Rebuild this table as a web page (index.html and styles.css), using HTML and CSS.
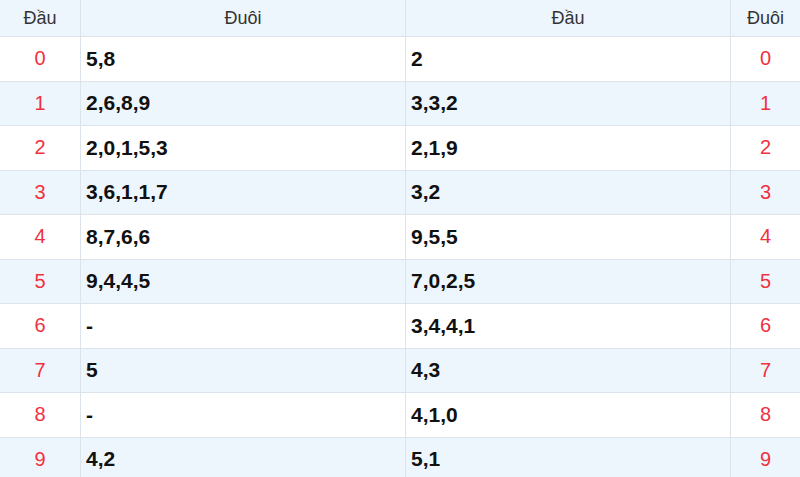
FILE: index.html
```html
<!DOCTYPE html>
<html>
<head>
<meta charset="utf-8">
<link rel="stylesheet" href="styles.css">
</head>
<body>
<table class="lt">
  <colgroup>
    <col class="c1"><col class="c2"><col class="c3"><col class="c4">
  </colgroup>
  <thead>
    <tr><th>Đầu</th><th>Đuôi</th><th>Đầu</th><th>Đuôi</th></tr>
  </thead>
  <tbody>
    <tr><td class="n">0</td><td class="v">5,8</td><td class="v">2</td><td class="n">0</td></tr>
    <tr><td class="n">1</td><td class="v">2,6,8,9</td><td class="v">3,3,2</td><td class="n">1</td></tr>
    <tr><td class="n">2</td><td class="v">2,0,1,5,3</td><td class="v">2,1,9</td><td class="n">2</td></tr>
    <tr><td class="n">3</td><td class="v">3,6,1,1,7</td><td class="v">3,2</td><td class="n">3</td></tr>
    <tr><td class="n">4</td><td class="v">8,7,6,6</td><td class="v">9,5,5</td><td class="n">4</td></tr>
    <tr><td class="n">5</td><td class="v">9,4,4,5</td><td class="v">7,0,2,5</td><td class="n">5</td></tr>
    <tr><td class="n">6</td><td class="v">-</td><td class="v">3,4,4,1</td><td class="n">6</td></tr>
    <tr><td class="n">7</td><td class="v">5</td><td class="v">4,3</td><td class="n">7</td></tr>
    <tr><td class="n">8</td><td class="v">-</td><td class="v">4,1,0</td><td class="n">8</td></tr>
    <tr><td class="n">9</td><td class="v">4,2</td><td class="v">5,1</td><td class="n">9</td></tr>
  </tbody>
</table>
</body>
</html>
```
FILE: styles.css
```css
html, body {
  margin: 0;
  padding: 0;
  background: #fff;
  overflow: hidden;
}
.lt {
  width: 801px;
  border-collapse: collapse;
  table-layout: fixed;
  font-family: "Liberation Sans", Arial, sans-serif;
  margin-top: -1px;
  margin-left: -1px;
}
.c1 { width: 81px; }
.c2 { width: 325px; }
.c3 { width: 325px; }
.c4 { width: 70px; }
.lt th, .lt td {
  border: 1px solid #dde3ea;
  padding: 0 5px;
}
.lt thead th {
  height: 36px;
  background: #eef6fd;
  font-weight: normal;
  font-size: 18px;
  color: #333;
  text-align: center;
}
.lt tbody td {
  height: 43.5px;
}
.lt tbody tr:nth-child(even) td {
  background: #eef6fd;
}
.n {
  color: #f0313f;
  text-align: center;
  font-size: 20px;
}
.v {
  font-weight: bold;
  font-size: 21px;
  color: #111;
  text-align: left;
}
```
